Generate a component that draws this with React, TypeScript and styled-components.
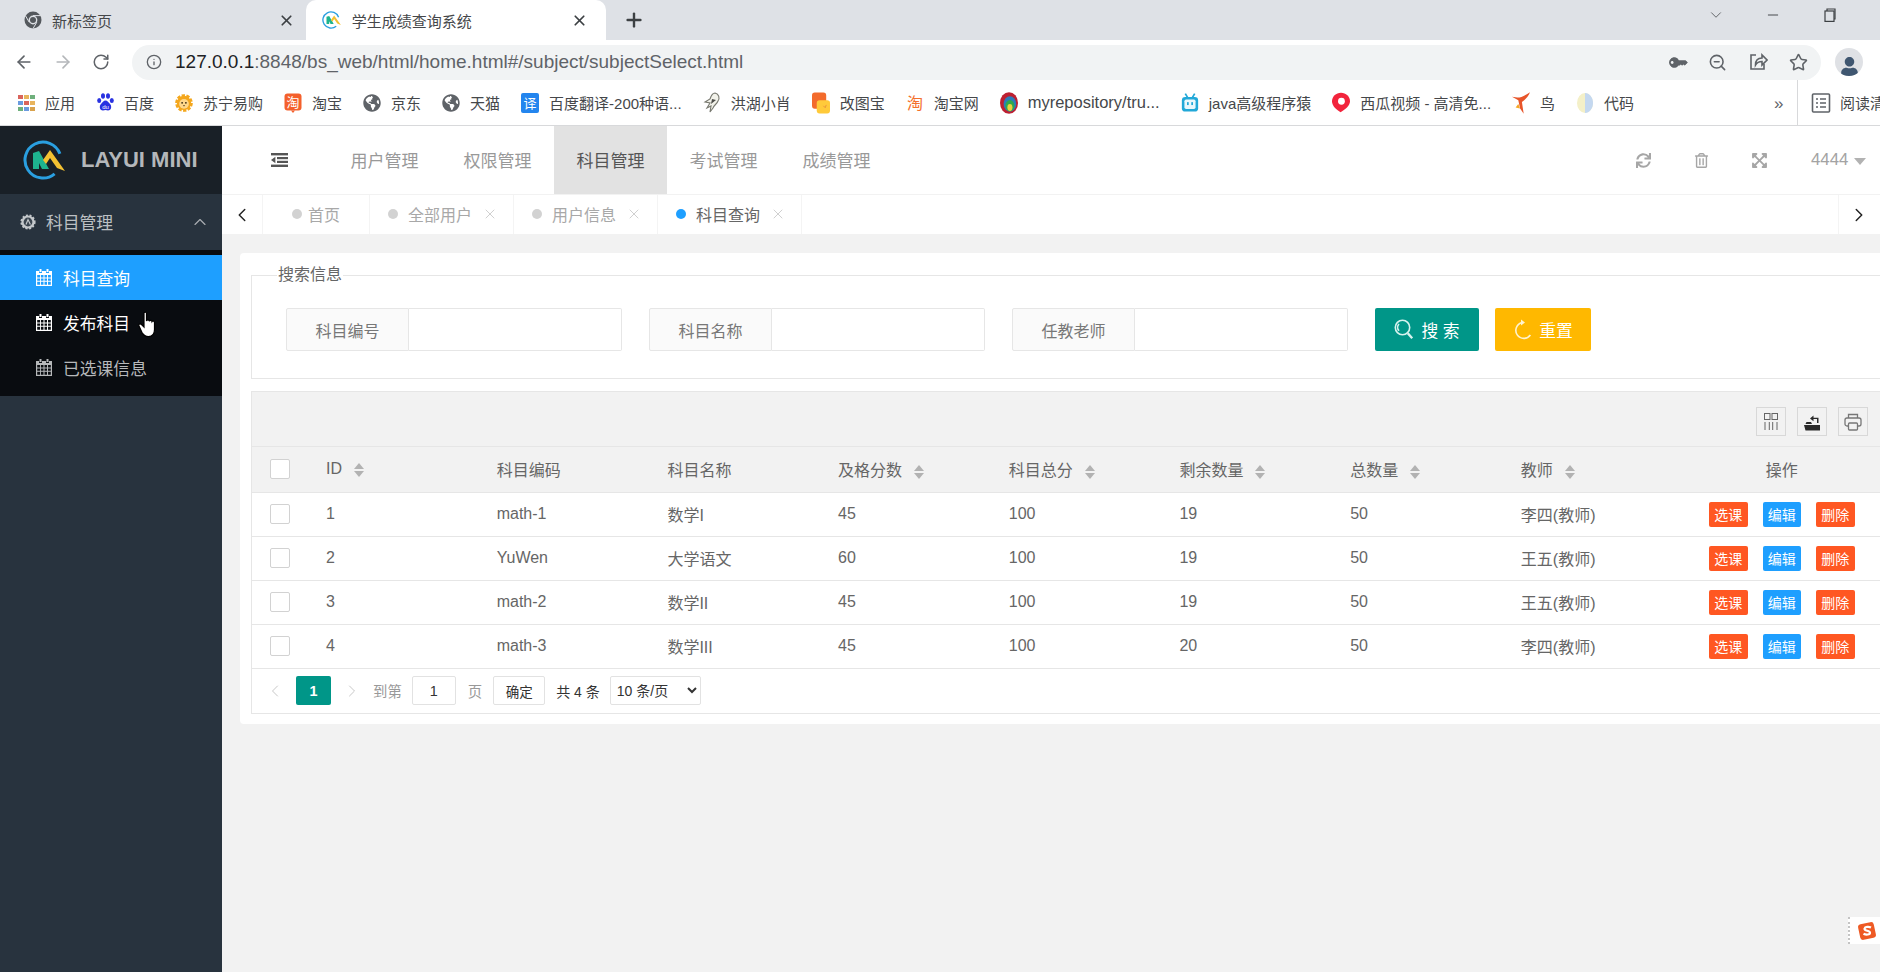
import React from 'react';
import styled, { createGlobalStyle } from 'styled-components';
import { ArrowLeft, ArrowRight, RotateCw, ZoomOut, Star, ChevronDown, ChevronUp, ChevronLeft, ChevronRight, X, Plus, Minus, Info } from 'lucide-react';
import { FaSync, FaRegTrashAlt, FaExpandArrowsAlt, FaKey, FaUser, FaGlobeAmericas } from 'react-icons/fa';

const FONT = '"Liberation Sans", "Noto Sans CJK SC", sans-serif';

const GlobalStyle = createGlobalStyle`
  html, body { margin: 0; padding: 0; background: #fff; }
  * { box-sizing: border-box; }
  body { font-family: ${FONT}; overflow: hidden; }
`;

const Page = styled.div`
  position: relative;
  width: 1880px;
  height: 972px;
  overflow: hidden;
  display: flex;
  flex-direction: column;
`;

/* ---- browser chrome ---- */
const TabStrip = styled.div`
  height: 40px;
  background: #dee1e6;
  display: flex;
  align-items: stretch;
  flex-shrink: 0;
`;
const BrowserTab = styled.div<{ $active?: boolean }>`
  width: ${p => (p.$active ? 300 : 306)}px;
  display: flex;
  align-items: center;
  gap: 10px;
  padding: ${p => (p.$active ? '0 18px 0 16px' : '0 11px 0 24px')};
  font-size: 15px;
  color: #45474a;
  background: ${p => (p.$active ? '#fff' : 'transparent')};
  border-radius: ${p => (p.$active ? '10px 10px 0 0' : '0')};
`;
const BrowserTabTitle = styled.span`
  flex: 1;
`;
const NewTab = styled.div`
  width: 56px;
  display: flex;
  align-items: center;
  justify-content: center;
  color: #3c4043;
`;
const WindowControls = styled.div`
  margin-left: auto;
  display: flex;
  align-items: center;
  padding-bottom: 10px;
  color: #3c4043;
`;
const WindowButton = styled.div<{ $w: number }>`
  width: ${p => p.$w}px;
  display: flex;
  justify-content: center;
`;
const NavBar = styled.div`
  height: 40px;
  background: #fff;
  display: flex;
  align-items: center;
  padding-top: 4px;
  flex-shrink: 0;
`;
const NavButton = styled.div<{ $w: number; $faded?: boolean }>`
  width: ${p => p.$w}px;
  display: flex;
  justify-content: center;
  color: ${p => (p.$faded ? '#b4b7ba' : '#5f6368')};
`;
const Omnibox = styled.div`
  width: 1689px;
  height: 35px;
  margin-left: 8px;
  border-radius: 18px;
  background: #f1f3f4;
  display: flex;
  align-items: center;
  padding-left: 14px;
  color: #5f6368;
`;
const UrlText = styled.div`
  margin-left: 13px;
  font-size: 19px;
  color: #5f6368;
  flex: 1;
  white-space: nowrap;
  b { font-weight: 400; color: #202124; }
`;
const OmniIcon = styled.div`
  width: 40.5px;
  display: flex;
  justify-content: center;
  color: #5f6368;
`;
const KeyGlyph = styled(FaKey)`
  transform: scaleX(-1) rotate(45deg);
`;
const OmniEnd = styled.span`
  width: 2px;
`;
const Avatar = styled.div`
  width: 28px;
  height: 28px;
  margin-left: 14px;
  border-radius: 50%;
  background: #dfe1e5;
  display: flex;
  align-items: flex-end;
  justify-content: center;
  overflow: hidden;
  color: #3f5670;
`;
const BookmarkBar = styled.div`
  height: 46px;
  background: #fff;
  border-bottom: 1px solid #d8d9db;
  display: flex;
  align-items: center;
  padding-left: 17px;
  gap: 21px;
  font-size: 15px;
  color: #45474a;
  white-space: nowrap;
  flex-shrink: 0;
`;
const Bookmark = styled.div`
  display: flex;
  align-items: center;
  gap: 10px;
`;
const BookmarkIcon = styled.span`
  width: 18px;
  height: 24px;
  display: flex;
  align-items: center;
  justify-content: center;
  flex-shrink: 0;
`;
const BookmarkLabel = styled.span<{ $latin?: boolean }>`
  font-size: ${p => (p.$latin ? '16.5px' : '15px')};
`;
const MoreMark = styled.div`
  position: absolute;
  top: 94px;
  left: 1774px;
  font-size: 17px;
  color: #5f6368;
`;
const ReadingList = styled.div`
  position: absolute;
  top: 80px;
  left: 1797px;
  width: 83px;
  height: 45px;
  border-left: 1px solid #d8d9db;
  background: #fff;
  display: flex;
  align-items: center;
  gap: 9px;
  padding-left: 13px;
  font-size: 15px;
  color: #45474a;
  white-space: nowrap;
  overflow: hidden;
  svg { flex-shrink: 0; }
`;

/* ---- app shell ---- */
const Shell = styled.div`
  flex: 1;
  min-height: 0;
  display: flex;
`;
const Sidebar = styled.aside`
  width: 222px;
  flex-shrink: 0;
  background: #28333e;
  display: flex;
  flex-direction: column;
`;
const Brand = styled.div`
  height: 68px;
  background: #192027;
  display: flex;
  align-items: center;
  padding-left: 23px;
  gap: 14px;
  font-size: 22px;
  font-weight: 700;
  color: #b4b7ba;
`;
const MenuHead = styled.div`
  height: 56px;
  display: flex;
  align-items: center;
  padding: 0 12px 0 20px;
  gap: 10px;
  font-size: 16.8px;
  color: #bcc0c3;
`;
const MenuArrow = styled.div`
  margin-left: auto;
  display: flex;
  color: #a9adb1;
`;
const SubMenu = styled.div`
  background: #090c10;
  padding: 5px 0 6px;
`;
const SubItem = styled.div<{ $active?: boolean; $dim?: boolean }>`
  height: 45px;
  display: flex;
  align-items: center;
  gap: 11px;
  padding-left: 36px;
  font-size: 16.8px;
  background: ${p => (p.$active ? '#1e9fff' : 'transparent')};
  color: ${p => (p.$dim ? '#b6b8ba' : '#fff')};
`;
const Main = styled.main`
  flex: 1;
  min-width: 0;
  display: flex;
  flex-direction: column;
  background: #f2f2f2;
`;
const Header = styled.header`
  height: 68px;
  background: #fff;
  display: flex;
  align-items: stretch;
  flex-shrink: 0;
`;
const FoldButton = styled.div`
  width: 106px;
  display: flex;
  align-items: center;
  padding-left: 49px;
`;
const NavItem = styled.div<{ $active?: boolean }>`
  padding: 0 22.5px 2px;
  display: flex;
  align-items: center;
  font-size: 17px;
  color: ${p => (p.$active ? '#555' : '#999')};
  background: ${p => (p.$active ? '#e2e2e2' : 'transparent')};
`;
const HeaderTools = styled.div`
  margin-left: auto;
  display: flex;
  align-items: stretch;
`;
const ToolButton = styled.div`
  width: 58px;
  display: flex;
  align-items: center;
  justify-content: center;
  color: #a6a6a6;
`;
const UserMenu = styled.div`
  width: 92px;
  display: flex;
  align-items: center;
  padding-left: 23px;
  font-size: 16.8px;
  color: #a3a3a3;
`;
const Caret = styled.span`
  margin-left: 6px;
  margin-top: 3px;
  border: 6px solid transparent;
  border-top: 7px solid #b2b2b2;
  border-bottom: 0;
`;
const TabBar = styled.div`
  height: 40px;
  background: #fff;
  border-top: 1px solid #f2f2f2;
  display: flex;
  align-items: stretch;
  flex-shrink: 0;
`;
const TabArrow = styled.div<{ $right?: boolean }>`
  width: 41px;
  display: flex;
  align-items: center;
  justify-content: center;
  color: #222;
  border-${p => (p.$right ? 'left' : 'right')}: 1px solid #f4f4f4;
  margin-left: ${p => (p.$right ? 'auto' : '0')};
  margin-right: ${p => (p.$right ? '1px' : '0')};
`;
const PageTab = styled.div<{ $home?: boolean; $active?: boolean }>`
  display: flex;
  align-items: center;
  padding: 0 ${p => (p.$home ? '29px' : '15px 0 18px')};
  gap: ${p => (p.$home ? '6px' : '10px')};
  padding-bottom: 2px;
  border-right: 1px solid #f4f4f4;
  font-size: 16px;
  color: ${p => (p.$active ? '#666' : '#a8a8a8')};
`;
const TabDot = styled.i<{ $active?: boolean }>`
  width: 10px;
  height: 10px;
  border-radius: 50%;
  background: ${p => (p.$active ? '#1e9fff' : '#d2d2d2')};
`;
const TabClose = styled.span`
  display: flex;
  color: #c4c4c4;
`;
const Content = styled.div`
  flex: 1;
  padding: 19px 0 0 18px;
`;
const Card = styled.div`
  width: 1670px;
  height: 471px;
  background: #fff;
  border-radius: 4px;
  padding: 10px 0 0 11px;
`;
const SearchSet = styled.fieldset`
  margin: 0;
  width: 1659px;
  border: 1px solid #e6e6e6;
  padding: 21px 0 27px 34px;
`;
const SearchLegend = styled.legend`
  margin-left: -9px;
  padding: 0 1px;
  font-size: 16px;
  line-height: 24px;
  color: #666;
`;
const SearchRow = styled.div`
  display: flex;
  align-items: stretch;
  height: 43px;
`;
const FieldGroup = styled.div`
  display: flex;
  width: 336px;
  margin-right: 27px;
`;
const FieldLabel = styled.label`
  width: 123px;
  background: #fafafa;
  border: 1px solid #e6e6e6;
  border-radius: 2px 0 0 2px;
  display: flex;
  align-items: center;
  justify-content: center;
  font-size: 16px;
  color: #777;
`;
const FieldInput = styled.input`
  flex: 1;
  min-width: 0;
  border: 1px solid #e6e6e6;
  border-left: 0;
  border-radius: 0 2px 2px 0;
  outline: none;
  background: #fff;
`;
const SearchButton = styled.button<{ $bg: string; $w: number }>`
  width: ${p => p.$w}px;
  border: 0;
  border-radius: 2px;
  background: ${p => p.$bg};
  color: #fff;
  font-family: inherit;
  font-size: 16.8px;
  display: flex;
  align-items: center;
  justify-content: center;
  gap: 7px;
  padding: 0;
  margin-right: 16px;
`;
const TableBox = styled.div`
  margin-top: 12px;
  width: 1640px;
  border: 1px solid #e6e6e6;
`;
const TableToolbar = styled.div`
  height: 55px;
  background: #f2f2f2;
  display: flex;
  justify-content: flex-end;
  align-items: flex-start;
  gap: 11px;
  padding: 15px 22px 0 0;
  border-bottom: 1px solid #e6e6e6;
`;
const ToolbarIcon = styled.div`
  width: 30px;
  height: 29px;
  border: 1px solid #d8d8d8;
  display: flex;
  align-items: center;
  justify-content: center;
  color: #444;
`;
const DataTable = styled.table`
  width: 1638px;
  border-collapse: collapse;
  table-layout: fixed;
  font-size: 16px;
  color: #666;
`;
const HeadCell = styled.th<{ $center?: boolean; $flush?: boolean }>`
  height: 45px;
  background: #f2f2f2;
  padding: ${p => (p.$flush ? '0' : '0 18px')};
  font-weight: 400;
  text-align: ${p => (p.$center ? 'center' : 'left')};
  border-bottom: 1px solid #e6e6e6;
`;
const BodyCell = styled.td<{ $flush?: boolean }>`
  height: 44px;
  padding: ${p => (p.$flush ? '0' : '0 18px')};
  text-align: left;
  border-bottom: 1px solid #e6e6e6;
`;
const SelectCol = styled.col`
  width: 56px;
`;
const DataCol = styled.col`
  width: 170.7px;
`;
const CheckCell = styled.div`
  width: 20px;
  height: 20px;
  margin-left: 18px;
  background: #fff;
  border: 1px solid #d2d2d2;
  border-radius: 2px;
`;
const SortMark = styled.span`
  display: inline-flex;
  flex-direction: column;
  gap: 2px;
  margin-left: 12px;
  vertical-align: 5px;
  &::before, &::after {
    content: '';
    border-left: 5.5px solid transparent;
    border-right: 5.5px solid transparent;
  }
  &::before { border-bottom: 6px solid #b2b2b2; }
  &::after { border-top: 6px solid #b2b2b2; }
`;
const ActionRow = styled.div`
  display: flex;
  justify-content: center;
  gap: 15px;
`;
const ActionButton = styled.span<{ $bg: string }>`
  width: 38.5px;
  height: 25px;
  border-radius: 2px;
  background: ${p => p.$bg};
  color: #fff;
  font-size: 14px;
  display: flex;
  align-items: center;
  justify-content: center;
`;
const Pager = styled.div`
  height: 44px;
  display: flex;
  align-items: center;
  padding-left: 8px;
  font-size: 14.4px;
  color: #999;
`;
const PagerArrow = styled.div`
  width: 30px;
  display: flex;
  justify-content: center;
  color: #c8c8c8;
  margin-right: 6px;
`;
const PageCurrent = styled.div`
  width: 35px;
  height: 29px;
  margin-right: 6px;
  border-radius: 2px;
  background: #009688;
  color: #fff;
  font-weight: 700;
  display: flex;
  align-items: center;
  justify-content: center;
`;
const PagerInput = styled.input`
  width: 44px;
  height: 29px;
  margin: 0 12px 0 10px;
  border: 1px solid #e2e2e2;
  border-radius: 2px;
  text-align: center;
  font: inherit;
  color: #333;
  outline: none;
`;
const PagerButton = styled.button`
  width: 52px;
  height: 29px;
  margin: 0 11px;
  padding: 0;
  border: 1px solid #e2e2e2;
  border-radius: 2px;
  background: #fff;
  font: inherit;
  font-size: 13.5px;
  color: #333;
`;
const PagerCount = styled.span`
  color: #333;
  margin-right: 10px;
  font-size: 14px;
`;
const PagerSelect = styled.select`
  width: 91px;
  height: 29px;
  border: 1px solid #e2e2e2;
  border-radius: 2px;
  background: #fff;
  font: inherit;
  font-size: 14px;
  color: #333;
  padding-left: 2px;
  outline: none;
`;

/* overlays */
const HandCursor = styled.svg`
  position: absolute;
  left: 138px;
  top: 311px;
`;
const ImeBadge = styled.div`
  position: absolute;
  left: 1848px;
  top: 917px;
  width: 32px;
  height: 27px;
  background: #fff;
  border-left: 2px dotted #c4c4c4;
  display: flex;
  align-items: center;
  padding-left: 7px;
`;

/* ---- drawings ---- */
const ChromeMark = () => (
  <svg width="18" height="18" viewBox="0 0 18 18">
    <circle cx="9" cy="9" r="8.5" fill="#54585d" />
    <circle cx="9" cy="9" r="4.4" fill="#dee1e6" />
    <circle cx="9" cy="9" r="3" fill="#54585d" />
    <path d="M9 4.6 L16.6 4.6 M5.2 11.2 L1.6 5 M12.8 11.2 L9 17.6" stroke="#dee1e6" strokeWidth="1" />
  </svg>
);
const LogoMark = ({ size }: { size: number }) => (
  <svg width={size * 1.1} height={size} viewBox="0 0 44 40">
    <path d="M36.9 13.8 A18 18 0 1 0 31.6 33.8" fill="none" stroke="#2a9fe0" strokeWidth="3" />
    <path d="M10 29V13l6-2 10 18h-7l-3-6v6z" fill="#1eb38f" />
    <path d="M20 20l7-10 15 21-8-3-7-10-4 6z" fill="#f3c132" />
  </svg>
);
const Calendar = () => (
  <svg width="16" height="17" viewBox="0 0 16 17">
    <path
      fillRule="evenodd"
      fill="currentColor"
      d="M3.5 0h2v3h-2zM10.5 0h2v3h-2zM0 2h3v2h3V2h4v2h3V2h3v15H0zM1.200 6v2.400h2.900V6zM5 6v2.400h2.500V6zM8.500 6v2.400H11V6zM12 6v2.400h2.800V6zM1.200 9.400v2.400h2.900V9.400zM5 9.400v2.400h2.500V9.400zM8.500 9.400v2.400H11V9.400zM12 9.400v2.400h2.800V9.400zM1.200 12.800v2.900h2.900v-2.900zM5 12.800v2.900h2.500v-2.900zM8.500 12.800v2.900H11v-2.900zM12 12.800v2.900h2.800v-2.900z"
    />
  </svg>
);
const FoldIcon = () => (
  <svg width="17" height="14" viewBox="0 0 17 14" fill="#555">
    <rect x="0" y="0" width="17" height="2.4" />
    <rect x="6" y="4" width="11" height="2.2" />
    <rect x="6" y="7.8" width="11" height="2.2" />
    <rect x="0" y="11.6" width="17" height="2.4" />
    <path d="M4.4 3.8v6.4L0 7z" />
  </svg>
);
const GroupIcon = () => (
  <svg width="16" height="16" viewBox="0 0 16 16">
    <circle cx="8" cy="8" r="6.6" fill="#c4c8cb" stroke="#c4c8cb" strokeWidth="2" strokeDasharray="2 1.6" />
    <circle cx="8" cy="8" r="4.4" fill="#3a444e" />
    <path d="M6 10.4 8 5.6l2.4 4.8" fill="none" stroke="#c4c8cb" strokeWidth="1.2" />
  </svg>
);
const ColsIcon = () => (
  <svg width="14" height="17" viewBox="0 0 14 17" fill="none" stroke="#666" strokeWidth="1">
    <rect x="0.5" y="0.5" width="5.5" height="6" />
    <rect x="8" y="0.5" width="5.500" height="6" />
    <path d="M1 9v8M5.300 9v8M8.700 9v8M13 9v8" />
  </svg>
);
const ExportIcon = () => (
  <svg width="16" height="18" viewBox="0 0 16 18" fill="#2a2a2a">
    <path d="M0 12h16v5.500H1.500zM1.500 11l1-2H7l1 2z" />
    <path d="M13 6v4h1.500V4.700H9.500V2.500L6 5.400l3.500 2.900V6z" />
  </svg>
);
const PrintIcon = () => (
  <svg width="18" height="18" viewBox="0 0 18 18" fill="none" stroke="#777" strokeWidth="1.3">
    <path d="M4.500 5V1.500h9V5" />
    <rect x="1" y="5" width="16" height="8" rx="2" />
    <rect x="4.500" y="10" width="9" height="7" rx="1" fill="#f2f2f2" />
  </svg>
);
const SearchGlyph = () => (
  <svg width="20" height="21" viewBox="0 0 20 21" fill="none" stroke="#d8f3ef" strokeWidth="1.6">
    <circle cx="8.500" cy="8.500" r="7.200" />
    <path d="M13.800 14.200l4.400 5" strokeWidth="2.400" />
    <path d="M5 11.800A5 5 0 0 1 5 5" />
  </svg>
);
const ResetGlyph = () => (
  <svg width="19" height="21" viewBox="0 0 19 21" fill="none" stroke="#fff3cf" strokeWidth="1.6">
    <path d="M9 3.600A8 8 0 1 0 17.400 16" />
    <path d="M8 0.400l4 3-4 3z" fill="#fff3cf" stroke="none" />
  </svg>
);
const SvgGlyph = styled.text`
  font-family: ${FONT};
  fill: #fff;
`;

const appColors = ['#d9645c', '#e8b45c', '#6fb07c', '#6a9be0', '#d9645c', '#e8b45c', '#6fb07c', '#6a9be0', '#d9a24c'];

const Fav = {
  apps: (
    <svg width="17" height="16" viewBox="0 0 17 16">
      {[0, 6, 12].flatMap((y, r) =>
        [0, 6, 12].map((x, i) => (
          <rect key={`${x}${y}`} x={x} y={y} width="5" height="4" fill={appColors[r * 3 + i]} />
        )),
      )}
    </svg>
  ),
  baidu: (
    <svg width="17" height="19" viewBox="0 0 17 19" fill="#2932e1">
      <ellipse cx="2.200" cy="7.500" rx="2" ry="2.600" />
      <ellipse cx="6" cy="3" rx="2" ry="2.800" />
      <ellipse cx="11" cy="3" rx="2" ry="2.800" />
      <ellipse cx="14.800" cy="7.500" rx="2" ry="2.600" />
      <path d="M8.500 7.500c2 0 3 2 4.500 3.500 2 2 1.500 6.500-2 6.500-1 0-1.500-.4-2.500-.4s-1.500.4-2.500.4c-3.500 0-4-4.500-2-6.500C5.500 9.500 6.500 7.500 8.500 7.500z" />
      <SvgGlyph x="8.500" y="16" fontSize="6" textAnchor="middle">du</SvgGlyph>
    </svg>
  ),
  suning: (
    <svg width="20" height="20" viewBox="0 0 20 20">
      <circle cx="10" cy="10" r="8" fill="#f4a71d" stroke="#f4a71d" strokeWidth="3.600" strokeDasharray="3.500 1.500" />
      <circle cx="10" cy="11" r="5.400" fill="#ffd78a" />
      <circle cx="7.900" cy="9.800" r="1" fill="#3a2a10" />
      <circle cx="12.100" cy="9.800" r="1" fill="#3a2a10" />
      <path d="M8.800 12.400h2.400L10 14z" fill="#3a2a10" />
    </svg>
  ),
  taobao: (
    <svg width="18" height="20" viewBox="0 0 18 20">
      <rect x="0.500" y="0.500" width="17" height="17" rx="3" fill="#f4602c" />
      <path d="M7 17.500l2 2.500 2-2.500z" fill="#f4602c" />
      <SvgGlyph x="9" y="14" fontSize="13" textAnchor="middle">淘</SvgGlyph>
    </svg>
  ),
  globe: <FaGlobeAmericas size={18} color="#5f6368" />,
  fanyi: (
    <svg width="18" height="20" viewBox="0 0 18 20">
      <rect width="18" height="20" rx="2" fill="#2385ee" />
      <SvgGlyph x="9" y="15" fontSize="13" textAnchor="middle">译</SvgGlyph>
    </svg>
  ),
  bird: (
    <svg width="18" height="22" viewBox="0 0 18 22">
      <path d="M12 1c4 1 5 5 3 8-1 3-4 4-5 7l-3 4 1-6-4 2 3-5-5-1 5-3c1-3 2-6 5-6z" fill="#f2f2ea" stroke="#77786f" strokeWidth="1.100" />
      <path d="M9 7l4 1-5 4z" fill="#4d4d49" />
    </svg>
  ),
  gaitu: (
    <svg width="19" height="22" viewBox="0 0 19 22">
      <rect x="0" y="0" width="15" height="17" rx="3" fill="#f36b2c" />
      <rect x="5" y="8" width="14" height="14" rx="3" fill="#ffca3a" />
      <path d="M12 14l2 2 1-3" stroke="#e8943a" strokeWidth="1" fill="none" />
    </svg>
  ),
  taoText: (
    <svg width="19" height="19" viewBox="0 0 19 19">
      <text x="9.500" y="16" fontSize="17" textAnchor="middle" fill="#f4702c" fontFamily={FONT}>淘</text>
    </svg>
  ),
  ring: (
    <svg width="20" height="24" viewBox="0 0 20 24">
      <ellipse cx="10" cy="12" rx="10" ry="12" fill="#bd2031" />
      <ellipse cx="11" cy="13" rx="7" ry="8.600" fill="#2b7dbb" />
      <ellipse cx="11" cy="15" rx="5" ry="6.200" fill="#2fa84e" />
      <ellipse cx="11" cy="17" rx="2.800" ry="3.800" fill="#e8d33f" />
    </svg>
  ),
  bili: (
    <svg width="21" height="24" viewBox="0 0 21 24">
      <path d="M5 1l3 5M16 1l-3 5" stroke="#22a8d8" strokeWidth="2" />
      <rect x="1" y="5" width="19" height="17" rx="4" fill="#22a8d8" />
      <rect x="4" y="8" width="13" height="11" rx="2" fill="#e9f7fc" />
      <rect x="7" y="11" width="2" height="3.400" fill="#22a8d8" />
      <rect x="12" y="11" width="2" height="3.400" fill="#22a8d8" />
    </svg>
  ),
  xigua: (
    <svg width="21" height="23" viewBox="0 0 21 23">
      <path d="M10.500 0C4.700 0 0 4.500 0 10c0 5 4 9 10 13 6-4 11-8 11-13C21 4.500 16.300 0 10.500 0z" fill="#f2243c" />
      <circle cx="11" cy="10" r="4" fill="#fff" />
    </svg>
  ),
  niao: (
    <svg width="20" height="24" viewBox="0 0 20 24" fill="#e8552a">
      <path d="M20 0c-2 5-6 9-9 11l2 13-4-6L7 9 0 5l6 1c4 0 8-2 14-6z" />
      <path d="M7 13l2 5-5-1z" fill="#f6a623" />
    </svg>
  ),
  code: (
    <svg width="18" height="22" viewBox="0 0 18 22">
      <ellipse cx="9" cy="11" rx="8" ry="10" fill="#f4f0c8" />
      <path d="M9 1c4.500 0 8 4.500 8 10s-3.500 10-8 10z" fill="#c4d8f0" />
    </svg>
  ),
  reading: (
    <svg width="20" height="20" viewBox="0 0 20 20" fill="none" stroke="#5f6368" strokeWidth="1.600">
      <rect x="1.500" y="1" width="17" height="18" rx="1" />
      <path d="M5 6h2M9 6h6M5 10h2M9 10h6M5 14h2M9 14h6" />
    </svg>
  ),
};

const bookmarks: [React.ReactNode, string, boolean?][] = [
  [Fav.apps, '应用'],
  [Fav.baidu, '百度'],
  [Fav.suning, '苏宁易购'],
  [Fav.taobao, '淘宝'],
  [Fav.globe, '京东'],
  [Fav.globe, '天猫'],
  [Fav.fanyi, '百度翻译-200种语...'],
  [Fav.bird, '洪湖小肖'],
  [Fav.gaitu, '改图宝'],
  [Fav.taoText, '淘宝网'],
  [Fav.ring, 'myrepository/tru...', true],
  [Fav.bili, 'java高级程序猿'],
  [Fav.xigua, '西瓜视频 - 高清免...'],
  [Fav.niao, '鸟'],
  [Fav.code, '代码'],
];

const rows = [
  { id: 1, code: 'math-1', name: '数学I', pass: 45, total: 100, left: 19, count: 50, teacher: '李四(教师)' },
  { id: 2, code: 'YuWen', name: '大学语文', pass: 60, total: 100, left: 19, count: 50, teacher: '王五(教师)' },
  { id: 3, code: 'math-2', name: '数学II', pass: 45, total: 100, left: 19, count: 50, teacher: '王五(教师)' },
  { id: 4, code: 'math-3', name: '数学III', pass: 45, total: 100, left: 20, count: 50, teacher: '李四(教师)' },
];

const headers: [string, boolean][] = [
  ['ID', true],
  ['科目编码', false],
  ['科目名称', false],
  ['及格分数', true],
  ['科目总分', true],
  ['剩余数量', true],
  ['总数量', true],
  ['教师', true],
];

const App = () => (
  <Page>
    <GlobalStyle />
    <TabStrip>
      <BrowserTab>
        <ChromeMark />
        <BrowserTabTitle>新标签页</BrowserTabTitle>
        <X size={17} color="#3c4043" strokeWidth={2.4} />
      </BrowserTab>
      <BrowserTab $active>
        <LogoMark size={18} />
        <BrowserTabTitle>学生成绩查询系统</BrowserTabTitle>
        <X size={17} color="#3c4043" strokeWidth={2.4} />
      </BrowserTab>
      <NewTab><Plus size={22} strokeWidth={2.6} /></NewTab>
      <WindowControls>
        <WindowButton $w={57}><ChevronDown size={18} strokeWidth={1} /></WindowButton>
        <WindowButton $w={57}><Minus size={16} strokeWidth={1.4} /></WindowButton>
        <WindowButton $w={57}>
          <svg width="12" height="14" viewBox="0 0 12 14" fill="none" stroke="#3c4043" strokeWidth="1.200">
            <rect x="1" y="3" width="9" height="10.400" />
            <path d="M3 3V1h8v10h-1" />
          </svg>
        </WindowButton>
        <WindowButton $w={22} />
      </WindowControls>
    </TabStrip>
    <NavBar>
      <NavButton $w={48}><ArrowLeft size={20} /></NavButton>
      <NavButton $w={30} $faded><ArrowRight size={20} /></NavButton>
      <NavButton $w={46}><RotateCw size={18} /></NavButton>
      <Omnibox>
        <Info size={16} />
        <UrlText><b>127.0.0.1</b>:8848/bs_web/html/home.html#/subject/subjectSelect.html</UrlText>
        <OmniIcon><KeyGlyph size={15} /></OmniIcon>
        <OmniIcon><ZoomOut size={19} /></OmniIcon>
        <OmniIcon>
          <svg width="20" height="20" viewBox="0 0 20 20" fill="none" stroke="#5f6368" strokeWidth="1.600">
            <path d="M8 3H3v14h13v-5" />
            <path d="M7.500 13c0-5 3-7 6.500-7V3l5 5-5 5V9.500c-3 0-5 1-6.500 3.500z" />
          </svg>
        </OmniIcon>
        <OmniIcon><Star size={19} /></OmniIcon>
        <OmniEnd />
      </Omnibox>
      <Avatar><FaUser size={19} /></Avatar>
    </NavBar>
    <BookmarkBar>
      {bookmarks.map(([icon, label, latin]) => (
        <Bookmark key={label}>
          <BookmarkIcon>{icon}</BookmarkIcon>
          <BookmarkLabel $latin={latin}>{label}</BookmarkLabel>
        </Bookmark>
      ))}
    </BookmarkBar>
    <MoreMark>»</MoreMark>
    <ReadingList>{Fav.reading}<span>阅读清单</span></ReadingList>

    <Shell>
      <Sidebar>
        <Brand><LogoMark size={40} /><span>LAYUI MINI</span></Brand>
        <MenuHead>
          <GroupIcon />
          <span>科目管理</span>
          <MenuArrow><ChevronUp size={20} strokeWidth={1.4} /></MenuArrow>
        </MenuHead>
        <SubMenu>
          <SubItem $active><Calendar /><span>科目查询</span></SubItem>
          <SubItem><Calendar /><span>发布科目</span></SubItem>
          <SubItem $dim><Calendar /><span>已选课信息</span></SubItem>
        </SubMenu>
      </Sidebar>
      <Main>
        <Header>
          <FoldButton><FoldIcon /></FoldButton>
          <NavItem>用户管理</NavItem>
          <NavItem>权限管理</NavItem>
          <NavItem $active>科目管理</NavItem>
          <NavItem>考试管理</NavItem>
          <NavItem>成绩管理</NavItem>
          <HeaderTools>
            <ToolButton><FaSync size={15} /></ToolButton>
            <ToolButton><FaRegTrashAlt size={15} /></ToolButton>
            <ToolButton><FaExpandArrowsAlt size={17} /></ToolButton>
            <UserMenu>4444<Caret /></UserMenu>
          </HeaderTools>
        </Header>
        <TabBar>
          <TabArrow><ChevronLeft size={22} strokeWidth={1.6} /></TabArrow>
          <PageTab $home><TabDot /><span>首页</span></PageTab>
          <PageTab><TabDot /><span>全部用户</span><TabClose><X size={16} strokeWidth={1.2} /></TabClose></PageTab>
          <PageTab><TabDot /><span>用户信息</span><TabClose><X size={16} strokeWidth={1.2} /></TabClose></PageTab>
          <PageTab $active><TabDot $active /><span>科目查询</span><TabClose><X size={16} strokeWidth={1.2} /></TabClose></PageTab>
          <TabArrow $right><ChevronRight size={22} strokeWidth={1.6} /></TabArrow>
        </TabBar>
        <Content>
          <Card>
            <SearchSet>
              <SearchLegend>搜索信息</SearchLegend>
              <SearchRow>
                <FieldGroup><FieldLabel>科目编号</FieldLabel><FieldInput /></FieldGroup>
                <FieldGroup><FieldLabel>科目名称</FieldLabel><FieldInput /></FieldGroup>
                <FieldGroup><FieldLabel>任教老师</FieldLabel><FieldInput /></FieldGroup>
                <SearchButton $bg="#009688" $w={104}><SearchGlyph />搜 索</SearchButton>
                <SearchButton $bg="#ffb800" $w={96}><ResetGlyph />重置</SearchButton>
              </SearchRow>
            </SearchSet>
            <TableBox>
              <TableToolbar>
                <ToolbarIcon><ColsIcon /></ToolbarIcon>
                <ToolbarIcon><ExportIcon /></ToolbarIcon>
                <ToolbarIcon><PrintIcon /></ToolbarIcon>
              </TableToolbar>
              <DataTable>
                <colgroup>
                  <SelectCol />
                  {headers.map(([h]) => <DataCol key={h} />)}
                  <col />
                </colgroup>
                <thead>
                  <tr>
                    <HeadCell $flush><CheckCell /></HeadCell>
                    {headers.map(([h, sortable]) => (
                      <HeadCell key={h}>{h}{sortable && <SortMark />}</HeadCell>
                    ))}
                    <HeadCell $center>操作</HeadCell>
                  </tr>
                </thead>
                <tbody>
                  {rows.map(r => (
                    <tr key={r.id}>
                      <BodyCell $flush><CheckCell /></BodyCell>
                      <BodyCell>{r.id}</BodyCell>
                      <BodyCell>{r.code}</BodyCell>
                      <BodyCell>{r.name}</BodyCell>
                      <BodyCell>{r.pass}</BodyCell>
                      <BodyCell>{r.total}</BodyCell>
                      <BodyCell>{r.left}</BodyCell>
                      <BodyCell>{r.count}</BodyCell>
                      <BodyCell>{r.teacher}</BodyCell>
                      <BodyCell>
                        <ActionRow>
                          <ActionButton $bg="#ff5722">选课</ActionButton>
                          <ActionButton $bg="#1e9fff">编辑</ActionButton>
                          <ActionButton $bg="#ff5722">删除</ActionButton>
                        </ActionRow>
                      </BodyCell>
                    </tr>
                  ))}
                </tbody>
              </DataTable>
              <Pager>
                <PagerArrow><ChevronLeft size={20} strokeWidth={1.2} /></PagerArrow>
                <PageCurrent>1</PageCurrent>
                <PagerArrow><ChevronRight size={20} strokeWidth={1.2} /></PagerArrow>
                <span>到第</span>
                <PagerInput defaultValue="1" />
                <span>页</span>
                <PagerButton>确定</PagerButton>
                <PagerCount>共 4 条</PagerCount>
                <PagerSelect defaultValue="10">
                  <option value="10">10 条/页</option>
                  <option value="20">20 条/页</option>
                </PagerSelect>
              </Pager>
            </TableBox>
          </Card>
        </Content>
      </Main>
    </Shell>

    <HandCursor width="20" height="27" viewBox="0 0 20 27">
      <path
        d="M6 2c0-1.300 2.500-1.300 2.500 0v8c.4-1.500 2.600-1.400 2.800.2.400-1.300 2.500-1.100 2.700.4.500-1 2.500-.8 2.500 1v7c0 4-2 7-6 7-3.500 0-5-1.500-6.500-4L1 15c-.8-1.500 1-3 2.500-1.500L6 16z"
        fill="#fff"
        stroke="#000"
        strokeWidth="1.200"
      />
    </HandCursor>
    <ImeBadge>
      <svg width="20" height="20" viewBox="0 0 20 20">
        <rect x="2" y="2" width="16" height="16" rx="3" fill="#ee5a24" transform="rotate(-12 10 10)" />
        <path d="M14 6.500c-2-1-6-1-6.500 1.200-.4 2.600 5.500 1.600 5.500 4 0 2.200-4 2.300-6.500 1" fill="none" stroke="#fff" strokeWidth="2.200" />
      </svg>
    </ImeBadge>
  </Page>
);

export default App;
